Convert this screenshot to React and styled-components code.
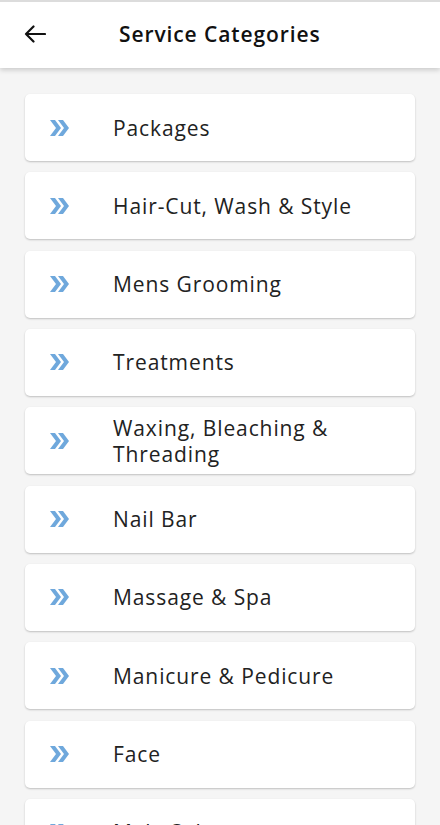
import React from 'react'
import styled, { createGlobalStyle } from 'styled-components'

const Global = createGlobalStyle`
  html, body { margin:0; padding:0; background:#f5f5f5; }
  body { font-family:"Open Sans", "Noto Sans", sans-serif; }
`

const categories = [
  'Packages',
  'Hair-Cut, Wash & Style',
  'Mens Grooming',
  'Treatments',
  'Waxing, Bleaching & Threading',
  'Nail Bar',
  'Massage & Spa',
  'Manicure & Pedicure',
  'Face',
  'Male Salon',
]

function Chevrons() {
  return (
    <svg width="20" height="16" viewBox="0 0 20 16">
      <path d="M1 0h5l6 8-6 8H1l6-8z" fill="#6fa8dc" />
      <path d="M9 0h5l6 8-6 8H9l6-8z" fill="#6fa8dc" />
    </svg>
  )
}

function App() {
  return (
    <Page>
      <Global />
      <Header>
        <BackButton>
          <svg width="22" height="18" viewBox="0 0 22 18" fill="none" stroke="#111" strokeWidth="2.2" strokeLinecap="round" strokeLinejoin="round">
            <path d="M21 9H2M9.5 1.5L2 9l7.5 7.5" />
          </svg>
        </BackButton>
        <Title>Service Categories</Title>
      </Header>
      <List>
        {categories.map(c => (
          <Card key={c}>
            <IconSlot><Chevrons /></IconSlot>
            <Label>{c}</Label>
          </Card>
        ))}
      </List>
    </Page>
  )
}

export default App

const Page = styled.div`
  height:825px;
  overflow:hidden;
  background:#f5f5f5;
`
const Header = styled.div`
  height:68px;
  background:#fff;
  border-top:2px solid #dcdcdc;
  box-sizing:border-box;
  display:flex;
  align-items:center;
  padding:0 24px 3px;
  box-shadow:0 2px 5px rgba(0,0,0,.18);
  position:relative;
  z-index:1;
`
const BackButton = styled.div`
  width:22px;
  height:18px;
  display:flex;
  margin-right:73px;
  margin-top:1px;
`
const Title = styled.div`
  font-size:21px;
  font-weight:600;
  color:#111;
  letter-spacing:0.9px;
`
const List = styled.div`
  display:flex;
  flex-direction:column;
  gap:11.33px;
  padding:26px 25px 0;
`
const Card = styled.div`
  height:67px;
  flex-shrink:0;
  background:#fff;
  border-radius:5px;
  box-shadow:0 1px 2px rgba(0,0,0,.22);
  display:flex;
  align-items:center;
  padding:0 0 0 24px;
`
const IconSlot = styled.div`
  width:20px;
  display:flex;
  margin-right:44px;
`
const Label = styled.div`
  font-size:21px;
  line-height:26px;
  color:#222;
  letter-spacing:0.9px;
  padding-right:40px;
`
